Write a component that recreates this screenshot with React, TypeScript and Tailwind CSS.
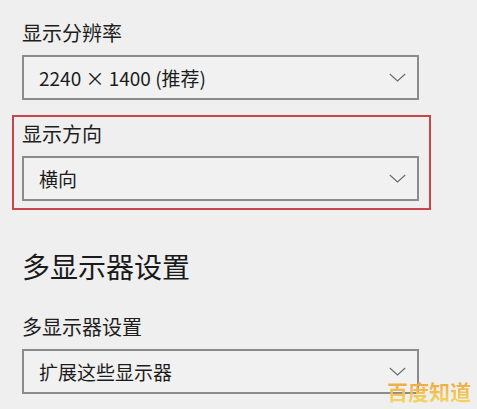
const Chevron = () => (
  <svg width="17" height="9" viewBox="0 0 17 9" fill="none" className="shrink-0">
    <path d="M0.8 1 L8.5 8 L16.2 1" stroke="#6a6a6a" strokeWidth="1.1" />
  </svg>
);

const Select = ({ value }: { value: string }) => (
  <div className="w-[397px] h-[45px] border-2 border-[#8b8b8b] bg-[#f1f1f1] flex items-center justify-between pl-[15px] pr-[11px]">
    <span className="text-[19px] leading-none text-[#1c1c1c]">{value}</span>
    <Chevron />
  </div>
);

export default function App() {
  return (
    <div
      className="relative w-[477px] h-[409px] overflow-hidden bg-[#efefef] px-[22px] pt-[19px]"
      style={{ fontFamily: '"Noto Sans CJK SC", "Noto Sans", sans-serif' }}
    >
      <div className="text-[20px] leading-[28px] text-[#1e1e1e]">显示分辨率</div>
      <div className="mt-[8px]">
        <Select value="2240 × 1400 (推荐)" />
      </div>

      {/* highlighted block */}
      <div className="-mx-[10px] mt-[15px] w-[419px] border-2 border-[#c9454a] pt-[3px] pb-[7px] px-[8px]">
        <div className="text-[20px] leading-[28px] text-[#1e1e1e]">显示方向</div>
        <div className="mt-[8px]">
          <Select value="横向" />
        </div>
      </div>

      <h2 className="mt-[38px] text-[28px] leading-[36px] text-[#1a1a1a]">多显示器设置</h2>
      <div className="mt-[29px] text-[20px] leading-[28px] text-[#1e1e1e]">多显示器设置</div>
      <div className="mt-[8px]">
        <Select value="扩展这些显示器" />
      </div>

      <div className="absolute left-[387px] top-[379px] text-[21px] leading-[24px] font-bold bg-linear-to-b from-[#eea23e] to-[#f5d663] bg-clip-text text-transparent">
        百度知道
      </div>
    </div>
  );
}
